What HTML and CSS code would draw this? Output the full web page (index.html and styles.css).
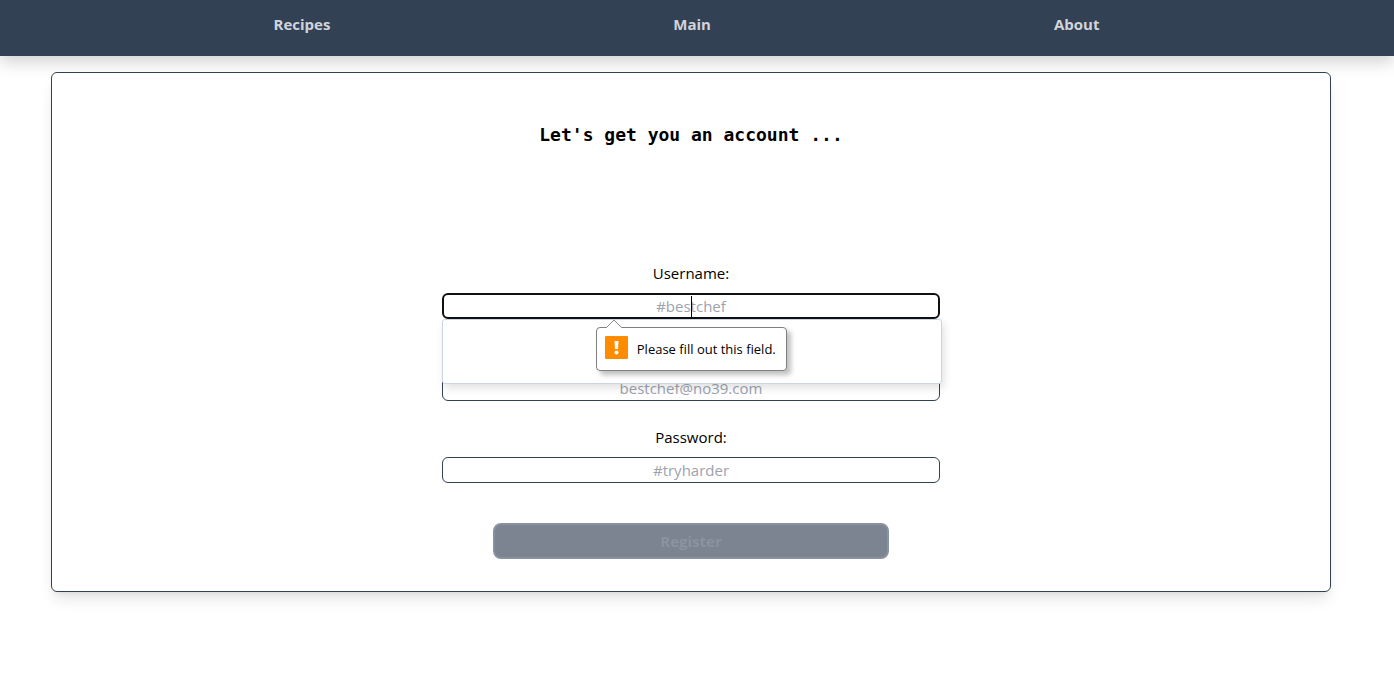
FILE: index.html
```html
<!DOCTYPE html>
<html lang="en">
<head>
<meta charset="utf-8">
<meta name="viewport" content="width=device-width, initial-scale=1">
<title>Register</title>
<link rel="stylesheet" href="styles.css">
</head>
<body>
<header class="site-header">
  <nav class="site-nav">
    <a href="#recipes">Recipes</a>
    <a href="#main">Main</a>
    <a href="#about">About</a>
  </nav>
</header>
<main class="page">
  <section class="card">
    <h1 class="card-title">Let's get you an account ...</h1>
    <form class="register-form">
      <div class="field">
        <label for="username">Username:</label>
        <div class="control">
          <input class="focused" id="username" type="text" placeholder="#bestchef" required>
          <span class="caret"></span>
          <div class="suggestions"></div>
          <div class="hint" role="alert">
            <svg class="hint-arrow" width="18" height="9" viewBox="0 0 18 9"><path d="M1 9 L9 1 L17 9" fill="#fff" stroke="#8a8a8a"/></svg>
            <svg class="hint-icon" width="23" height="23" viewBox="0 0 23 23"><rect width="23" height="23" rx="1" fill="#ff8c00"/><path d="M9.500 5h4l-.5 8h-3z" fill="#fff"/><circle cx="11.500" cy="16.500" r="2" fill="#fff"/></svg>
            <span>Please fill out this field.</span>
          </div>
        </div>
      </div>
      <div class="field field-unlabelled">
        <input id="email" type="email" aria-label="Email" placeholder="bestchef@no39.com" required>
      </div>
      <div class="field">
        <label for="password">Password:</label>
        <input id="password" type="password" placeholder="#tryharder" required>
      </div>
      <button class="submit" type="submit" disabled>Register</button>
    </form>
  </section>
</main>
</body>
</html>
```
FILE: styles.css
```css
* {
  box-sizing: border-box;
}

body {
  margin: 0;
  background: #fff;
  color: #000;
  font: 15px/24px "Open Sans", "Noto Sans", sans-serif;
}

.site-header {
  padding: 12px 0 20px;
  background: #334155;
  box-shadow: 0 6px 16px rgba(0, 0, 0, 0.18);
}

.site-nav {
  display: flex;
  justify-content: space-around;
  padding: 0 123px 0 102px;
}

.site-nav a {
  color: #d1d5db;
  font-weight: 700;
  text-decoration: none;
}

.page {
  padding: 16px 12px 32px 0;
}

.card {
  max-width: 1280px;
  margin: 0 auto;
  padding: 48px 0 32px;
  border: 1px solid #334155;
  border-radius: 6px;
  background: #fff;
  box-shadow: 0 10px 15px -3px rgba(0, 0, 0, 0.1), 0 4px 6px -4px rgba(0, 0, 0, 0.1);
}

.card-title {
  margin: 0 0 112px;
  font: 700 18px/28px "DejaVu Sans Mono", monospace;
  text-align: center;
}

.register-form {
  display: flex;
  flex-direction: column;
  align-items: center;
  gap: 24px;
}

.field {
  display: flex;
  flex-direction: column;
  gap: 8px;
  width: 39%;
  text-align: center;
}

.field-unlabelled {
  padding-top: 32px;
}

.control {
  position: relative;
  display: flex;
}

.field input {
  width: 100%;
  height: 26px;
  padding: 0;
  border: 1px solid #334155;
  border-radius: 6px;
  background: #fff;
  font: inherit;
  text-align: center;
}

.field input.focused {
  border: 2px solid #101010;
}

.field input::placeholder {
  color: #9ca3af;
  opacity: 1;
}

.caret {
  position: absolute;
  top: 3px;
  left: 50%;
  width: 1px;
  height: 21px;
  background: #000;
}

.suggestions {
  position: absolute;
  z-index: 1;
  top: 26px;
  left: 0;
  right: -2px;
  height: 65px;
  border: 1px solid #cbd5e1;
  border-radius: 3px;
  background: #fff;
  box-shadow: 2px 4px 8px rgba(0, 0, 0, 0.12);
}

.hint {
  position: absolute;
  z-index: 2;
  top: 34px;
  left: 154px;
  display: flex;
  align-items: center;
  gap: 9px;
  height: 44px;
  padding: 0 10px 0 8px;
  border: 1px solid #808080;
  border-radius: 4px;
  background: #fff;
  box-shadow: 4px 4px 5px rgba(0, 0, 0, 0.25);
  font-size: 13px;
  white-space: nowrap;
}

.hint-arrow {
  position: absolute;
  top: -9px;
  left: 8px;
}

.hint-icon {
  align-self: flex-start;
  margin-top: 8px;
}

.submit {
  width: 31%;
  height: 36px;
  margin-top: 16px;
  padding: 0;
  border: 2px solid #89929e;
  border-radius: 8px;
  background: #7c8492;
  color: #8b939f;
  font: inherit;
  font-weight: 700;
}
```
